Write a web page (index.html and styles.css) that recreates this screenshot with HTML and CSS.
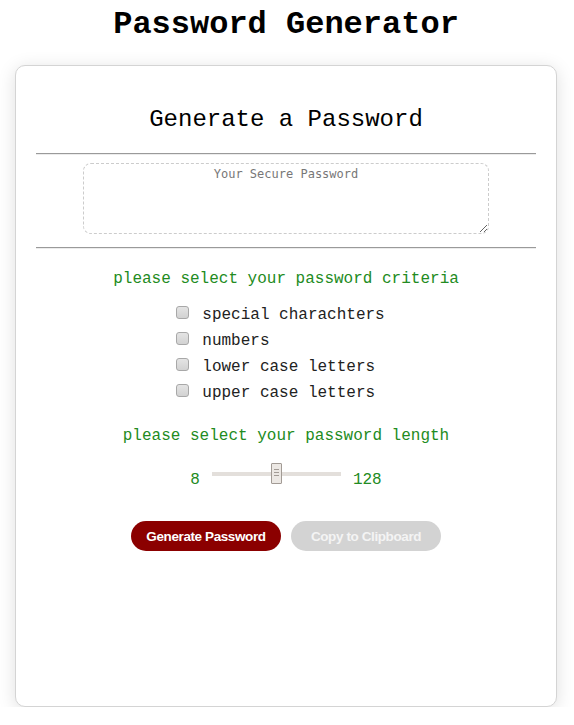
FILE: index.html
```html
<!DOCTYPE html>
<html lang="en">
<head>
<meta charset="utf-8">
<title>Password Generator</title>
<link rel="stylesheet" href="styles.css">
</head>
<body>
<div class="page">
  <h1 class="title">Password Generator</h1>
  <div class="card">
    <h2 class="card-title">Generate a Password</h2>
    <hr class="rule">
    <textarea class="output" placeholder="Your Secure Password" readonly></textarea>
    <hr class="rule rule-second">
    <p class="prompt prompt-criteria">please select your password criteria</p>
    <div class="criteria">
      <label class="option"><input type="checkbox" class="check"><span>special charachters</span></label>
      <label class="option"><input type="checkbox" class="check"><span>numbers</span></label>
      <label class="option"><input type="checkbox" class="check"><span>lower case letters</span></label>
      <label class="option"><input type="checkbox" class="check"><span>upper case letters</span></label>
    </div>
    <p class="prompt prompt-length">please select your password length</p>
    <div class="slider-row">
      <span class="num">8</span>
      <input type="range" class="slider" min="8" max="128" value="68">
      <span class="num">128</span>
    </div>
    <div class="buttons">
      <button class="btn btn-generate">Generate Password</button>
      <button class="btn btn-copy">Copy to Clipboard</button>
    </div>
  </div>
</div>
</body>
</html>
```
FILE: styles.css
```css
html, body {
  margin: 0;
  padding: 0;
  background: #ffffff;
}

body {
  font-family: "Courier New", "Liberation Mono", monospace;
  color: #000;
}

.page {
  width: 542px;
  margin-left: 15px;
  padding-top: 7px;
}

.title {
  margin: 0;
  font-size: 32px;
  font-weight: bold;
  line-height: 36px;
  text-align: center;
  color: #000;
}

.card {
  box-sizing: border-box;
  height: 642px;
  margin-top: 22px;
  padding: 20px 20px;
  border: 1px solid #d4d4d4;
  border-radius: 10px;
  background: #fff;
  box-shadow: 0 3px 18px rgba(0, 0, 0, 0.13);
}

.card-title {
  margin: 20px 0 20px;
  font-size: 24px;
  font-weight: normal;
  line-height: 27px;
  text-align: center;
  color: #000;
}

.rule {
  height: 0;
  margin: 0;
  border: 0;
  border-top: 1px solid #9a9a9a;
  border-bottom: 1px solid #ececec;
}

.rule-second {
  margin-top: 13px;
}

.output {
  display: block;
  box-sizing: border-box;
  width: 406px;
  height: 71px;
  margin: 8px auto 0;
  padding: 3px 4px;
  border: 1px dashed #cccccc;
  border-radius: 8px;
  font-family: "DejaVu Sans Mono", monospace;
  font-size: 12px;
  text-align: center;
  color: #333;
  background: #fff;
  outline: none;
}

.output::placeholder {
  color: #777;
}

.prompt {
  margin: 21px 0 0;
  font-size: 16px;
  line-height: 18px;
  text-align: center;
  color: #228b22;
}

.criteria {
  display: flex;
  flex-direction: column;
  width: fit-content;
  margin: 14px auto 0;
  padding-right: 11px;
}

.option {
  display: flex;
  align-items: flex-start;
  gap: 13px;
  height: 26px;
  font-size: 16px;
  line-height: 26px;
  color: #222;
}

.check {
  -webkit-appearance: none;
  appearance: none;
  box-sizing: border-box;
  width: 13px;
  height: 13px;
  margin: 4px 0 0;
  border: 1px solid #a8a8a8;
  border-radius: 3px;
  background: linear-gradient(#e4e4e4, #d2d2d2);
}

.slider-row {
  display: flex;
  justify-content: center;
  align-items: flex-end;
  margin-top: 18px;
}

.num {
  font-size: 16px;
  line-height: 16px;
  color: #228b22;
}

.slider {
  -webkit-appearance: none;
  appearance: none;
  width: 129px;
  height: 21px;
  margin: 0 12px 4px;
  padding: 0;
  background: transparent;
}

.slider::-webkit-slider-runnable-track {
  height: 4px;
  background: #e3dfdb;
  border: 0;
}

.slider::-webkit-slider-thumb {
  -webkit-appearance: none;
  box-sizing: border-box;
  width: 11px;
  height: 21px;
  margin-top: -8.5px;
  border: 1px solid #a29b95;
  border-radius: 1px;
  background:
    linear-gradient(#a29b95, #a29b95) center 5px / 5px 1px no-repeat,
    linear-gradient(#a29b95, #a29b95) center 8px / 5px 1px no-repeat,
    linear-gradient(#a29b95, #a29b95) center 11px / 5px 1px no-repeat,
    #ece8e4;
}

.buttons {
  display: flex;
  justify-content: center;
  gap: 10px;
  margin-top: 33px;
}

.btn {
  width: 150px;
  height: 30px;
  padding: 0;
  border: 0;
  border-radius: 15px;
  font-family: "Liberation Sans", Arial, sans-serif;
  font-size: 13.5px;
  font-weight: bold;
  letter-spacing: -0.4px;
  color: #fff;
  cursor: pointer;
}

.btn-generate {
  background: #8b0000;
}

.btn-copy {
  background: #d3d3d3;
  color: #f4f4f4;
}
```
